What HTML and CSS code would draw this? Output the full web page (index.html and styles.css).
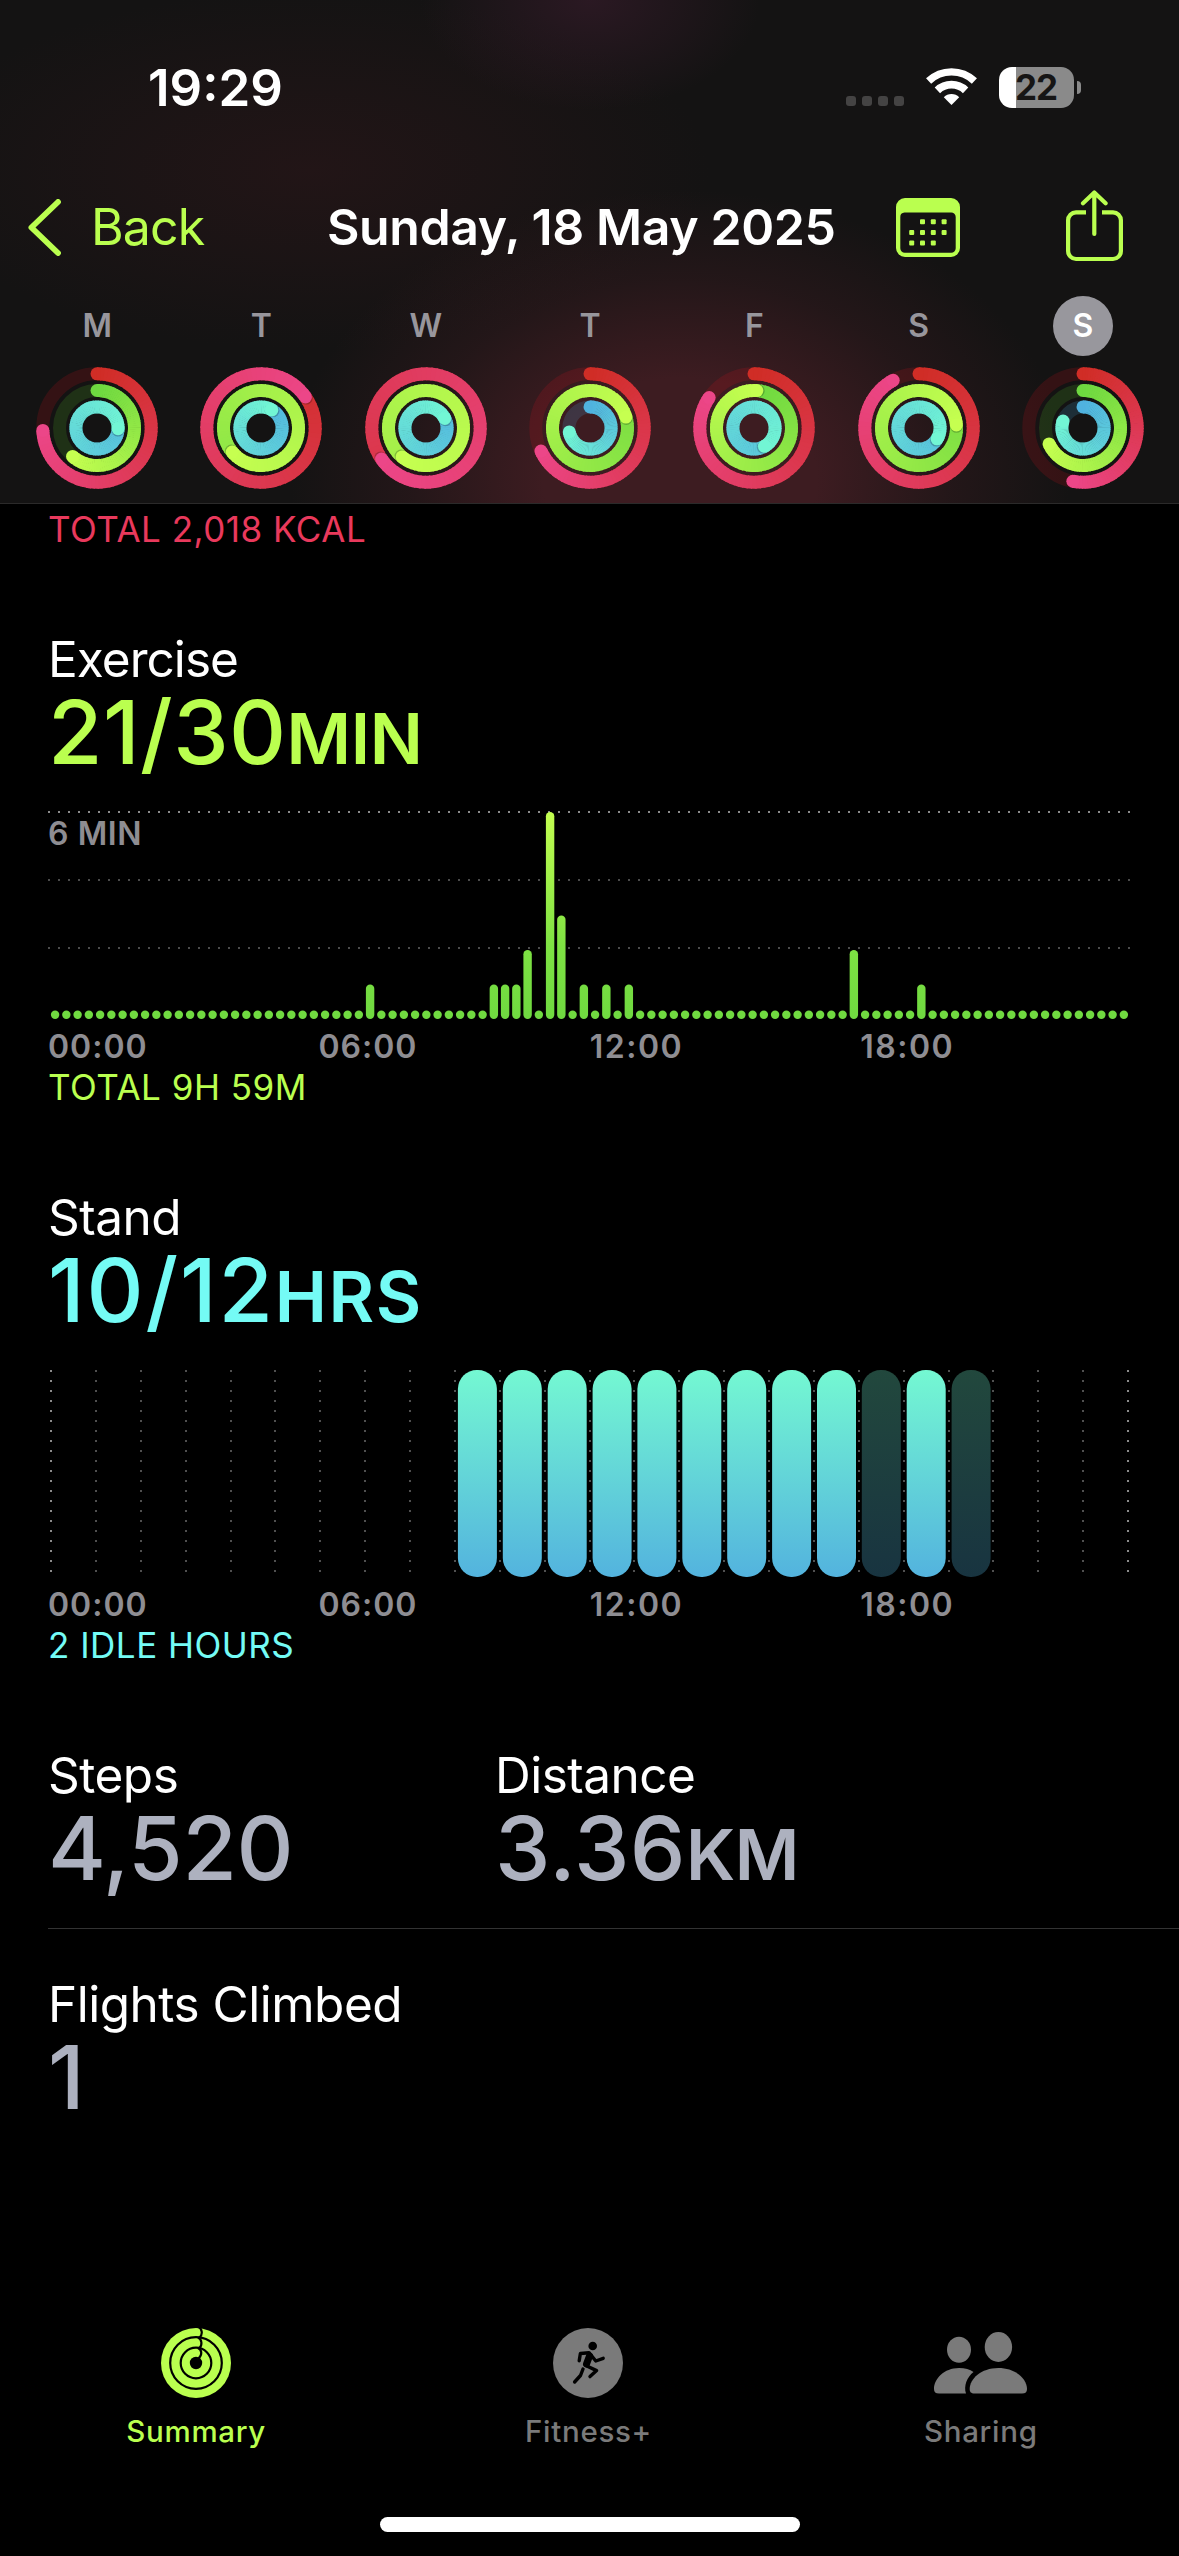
FILE: index.html
```html
<!DOCTYPE html>
<html lang="en">
<head>
    <meta charset="UTF-8">
    <meta name="viewport" content="width=device-width, initial-scale=1.0">
    <title>Activity Summary</title>
    <link rel="stylesheet" href="styles.css">
</head>
<body>
    <div class="screen">
        <header class="header">
            <div class="status-bar">
                <span class="time">19:29</span>
                <div class="status-icons">
                    <svg class="signal" width="58" height="38" viewBox="0 0 58 38" fill="#444343">
                        <rect x="0" y="28" width="10" height="10" rx="3"/>
                        <rect x="16" y="28" width="10" height="10" rx="3"/>
                        <rect x="32" y="28" width="10" height="10" rx="3"/>
                        <rect x="48" y="28" width="10" height="10" rx="3"/>
                    </svg>
                    <svg class="wifi" width="51" height="38" viewBox="0 0 51 38" fill="none" stroke="#fff">
                        <path d="M2.6 13A33.2 33.2 0 0 1 48.4 13" stroke-width="7.4"/>
                        <path d="M11.4 22.3A20.5 20.5 0 0 1 39.6 22.3" stroke-width="7.8"/>
                        <path d="M25.5 37L17.8 29.2A11 11 0 0 1 33.2 29.2Z" fill="#fff" stroke="none"/>
                    </svg>
                    <div class="battery">22</div>
                    <div class="battery-tip"></div>
                </div>
            </div>

            <nav class="nav">
                <div class="back">
                    <svg width="33" height="57" viewBox="0 0 33 57" fill="none" stroke="#baff4f" stroke-width="5.8" stroke-linecap="round" stroke-linejoin="round">
                        <path d="M30 3L3.4 28.5L30 54"/>
                    </svg>
                    <span class="back-label">Back</span>
                </div>
                <h1 class="title">Sunday, 18 May 2025</h1>
                <svg width="64" height="59" viewBox="0 0 64 59" fill="#baff4f">
                    <path fill-rule="evenodd" d="M9 0H55A9 9 0 0 1 64 9V50A9 9 0 0 1 55 59H9A9 9 0 0 1 0 50V9A9 9 0 0 1 9 0ZM8.5 14.5A4.5 4.5 0 0 0 4.3 19V50.2A4.5 4.5 0 0 0 8.8 54.7H55.2A4.5 4.5 0 0 0 59.7 50.2V19A4.5 4.5 0 0 0 55.2 14.5Z"/>
                    <g>
                        <rect x="24" y="21.2" width="5" height="5" rx="1"/>
                        <rect x="34.8" y="21.2" width="5" height="5" rx="1"/>
                        <rect x="45.6" y="21.2" width="5" height="5" rx="1"/>
                        <rect x="13.2" y="31.9" width="5" height="5" rx="1"/>
                        <rect x="24" y="31.9" width="5" height="5" rx="1"/>
                        <rect x="34.8" y="31.9" width="5" height="5" rx="1"/>
                        <rect x="45.6" y="31.9" width="5" height="5" rx="1"/>
                        <rect x="13.2" y="42.6" width="5" height="5" rx="1"/>
                        <rect x="24" y="42.6" width="5" height="5" rx="1"/>
                        <rect x="34.8" y="42.6" width="5" height="5" rx="1"/>
                    </g>
                </svg>
                <svg class="share" width="57" height="74" viewBox="0 0 57 74" fill="none" stroke="#baff4f" stroke-width="4.2" stroke-linejoin="round">
                    <path d="M20 22.3H10A8 8 0 0 0 2.1 30.3V61A8 8 0 0 0 10 69H47A8 8 0 0 0 54.9 61V30.3A8 8 0 0 0 47 22.3H36"/>
                    <path stroke-linecap="round" d="M28.3 44V2.5M17 13.2L28.3 2.5L39.6 13.2"/>
                </svg>
            </nav>

            <div class="week" id="week"></div>
        </header>

        <main class="content">
            <div class="total move">TOTAL 2,018 KCAL</div>

            <section class="section">
                <div class="label tight">Exercise</div>
                <div class="value exercise">21/30<span class="unit">MIN</span></div>
                <div class="chart">
                    <svg id="exercise-chart" width="1131" height="208" viewBox="0 0 1131 208">
                        <defs>
                            <linearGradient id="green" gradientUnits="userSpaceOnUse" x1="0" y1="208" x2="0" y2="0">
                                <stop offset="0" stop-color="#6fd940"/>
                                <stop offset="0.35" stop-color="#7ee243"/>
                                <stop offset="1" stop-color="#c4fe50"/>
                            </linearGradient>
                        </defs>
                    </svg>
                    <span class="chart-max">6 MIN</span>
                </div>
                <div class="axis"><span>00:00</span><span>06:00</span><span class="late">12:00</span><span class="late">18:00</span></div>
                <div class="total exercise">TOTAL 9H 59M</div>
            </section>

            <section class="section">
                <div class="label">Stand</div>
                <div class="value stand wide">10/12<span class="unit">HRS</span></div>
                <div class="chart">
                    <svg id="stand-chart" width="1131" height="208" viewBox="0 0 1131 208">
                        <defs>
                            <linearGradient id="blue" x1="0" y1="1" x2="0" y2="0">
                                <stop offset="0" stop-color="#53b3de"/>
                                <stop offset="1" stop-color="#74f8d2"/>
                            </linearGradient>
                        </defs>
                    </svg>
                </div>
                <div class="axis"><span>00:00</span><span>06:00</span><span class="late">12:00</span><span class="late">18:00</span></div>
                <div class="total stand">2 IDLE HOURS</div>
            </section>

            <section class="section stats">
                <div class="stat">
                    <div class="label">Steps</div>
                    <div class="value steps">4,520</div>
                </div>
                <div class="stat">
                    <div class="label">Distance</div>
                    <div class="value">3.36<span class="unit">KM</span></div>
                </div>
            </section>
            <section class="flights">
                <div class="label">Flights Climbed</div>
                <div class="value">1</div>
            </section>
        </main>

        <footer class="tab-bar">
            <div class="tabs">
                <div class="tab active">
                    <svg width="70" height="70" viewBox="0 0 70 70">
                        <circle cx="35" cy="35" r="35" fill="#baff4f"/>
                        <g fill="none" stroke="#000" stroke-width="2.2">
                            <circle cx="35" cy="35" r="25.8"/>
                            <circle cx="35" cy="35" r="15.3"/>
                            <path d="M36.5 -1.5C41.5 0.5 42 6.5 38.5 9.5"/>
                            <path d="M37 9.500C41 11.5 41.5 17 38.5 20"/>
                            <path d="M37 20C41 22 41.5 27 37.5 30.5"/>
                        </g>
                        <circle cx="35" cy="35" r="6.2"/>
                    </svg>
                    <span>Summary</span>
                </div>
                <div class="tab">
                    <svg width="70" height="70" viewBox="0 0 70 70">
                        <circle cx="35" cy="35" r="35" fill="#7a7a7a"/>
                        <circle cx="39.7" cy="18" r="4.3"/>
                        <g fill="none" stroke="#000" stroke-width="3.4" stroke-linecap="round" stroke-linejoin="round">
                            <path d="M26.2 32.8L27.4 25.5L36 24.7L42.8 33L50.2 30.3"/>
                            <path d="M32.8 37.5L43.6 42.6L37 48.6"/>
                            <path d="M30 41L27.5 47.5L21.6 54"/>
                            <path d="M36.5 28L33.5 36" stroke-width="7"/>
                        </g>
                    </svg>
                    <span>Fitness+</span>
                </div>
                <div class="tab">
                    <svg width="93" height="70" viewBox="0 0 93 70" fill="#7a7a7a">
                        <ellipse cx="64.4" cy="19" rx="13.7" ry="15"/>
                        <ellipse cx="25" cy="21.8" rx="12" ry="13"/>
                        <path d="M40.5 65.5C37 65.5 35.7 64 35.7 61C35.7 51 47 40 64.3 40C81.6 40 93 51 93 61C93 64 91.5 65.5 88 65.5Z"/>
                        <path d="M5 65.5C1.5 65.5 0 64 0 61C0 51 10 40 25 40C31 40 36 41.5 39.5 44C33 49 29.5 58 32 65.5Z"/>
                    </svg>
                    <span>Sharing</span>
                </div>
            </div>
            <div class="home-indicator"></div>
        </footer>
    </div>

    <script>
        // ring progress per day: [move, exercise, stand], 1 = goal reached
        const days = [
            { name: 'M', rings: [0.743, 0.613, 1.255] },
            { name: 'T', rings: [1.153, 1.639, 1.086] },
            { name: 'W', rings: [1.653, 2.61, 1.175] },
            { name: 'T', rings: [0.68, 1.203, 0.72] },
            { name: 'F', rings: [0.845, 1.012, 1.418] },
            { name: 'S', rings: [0.921, 1.237, 1.336] },
            { name: 'S', rings: [0.53, 0.68, 0.803], selected: true }
        ];

        const ringStyles = [
            { r: 54.2, from: [208, 45, 38], to: [236, 70, 136], track: 'rgba(225, 20, 30, 0.16)' },
            { r: 37.5, from: [110, 216, 64], to: [198, 255, 80], track: 'rgba(95, 220, 40, 0.15)' },
            { r: 21.1, from: [80, 178, 223], to: [114, 246, 212], track: 'rgba(70, 170, 220, 0.18)' }
        ];

        function point(r, turn) {
            const a = turn * 2 * Math.PI;
            return [(61 + r * Math.sin(a)).toFixed(2), (61 - r * Math.cos(a)).toFixed(2)];
        }

        function mix(from, to, t) {
            return 'rgb(' + from.map((c, i) => Math.round(c + (to[i] - c) * t)).join(',') + ')';
        }

        function ring(style, progress) {
            const r = style.r;
            const start = Math.max(0, progress - 1);
            const steps = 72;
            let out = `<circle cx="61" cy="61" r="${r}" fill="none" stroke="${style.track}" stroke-width="13"/>`;

            if (progress < 1) {
                const [x, y] = point(r, 0);
                out += `<circle cx="${x}" cy="${y}" r="6.5" fill="${mix(style.from, style.to, 0)}"/>`;
            }

            const size = (progress - start) / steps;
            for (let i = 0; i < steps; i++) {
                const a = start + i * size;
                const b = Math.min(a + size * 1.3, progress);
                const [x1, y1] = point(r, a);
                const [x2, y2] = point(r, b);
                out += `<path d="M${x1} ${y1}A${r} ${r} 0 0 1 ${x2} ${y2}" fill="none" stroke-width="13" stroke="${mix(style.from, style.to, a / progress)}"/>`;
            }

            if (progress >= 1) {
                const [sx, sy] = point(r, progress + 1.6 / (2 * Math.PI * r));
                out += `<circle cx="${sx}" cy="${sy}" r="6.3" fill="rgba(0, 0, 0, 0.22)"/>`;
            }
            const [ex, ey] = point(r, progress);
            out += `<circle cx="${ex}" cy="${ey}" r="6.5" fill="${mix(style.from, style.to, 1)}"/>`;
            return out;
        }

        document.getElementById('week').innerHTML = days.map(day => `
            <div class="day">
                <span class="day-name${day.selected ? ' selected' : ''}">${day.name}</span>
                <svg width="122" height="122" viewBox="0 0 122 122">${day.rings.map((p, i) => ring(ringStyles[i], p)).join('')}</svg>
            </div>`).join('');

        // exercise minutes per quarter of an hour
        const minutes = { 28: 1, 39: 1, 40: 1, 41: 1, 42: 2, 44: 6, 45: 3, 47: 1, 49: 1, 51: 1, 71: 2, 77: 1 };
        let bars = '';
        [0, 68, 136].forEach((y, i) => {
            bars += `<line x1="0" x2="1083" y1="${y + 1}" y2="${y + 1}" stroke="${i ? '#4c4c4c' : '#8c8c8c'}" stroke-width="2" stroke-dasharray="2 8"/>`;
        });
        for (let i = 0; i < 96; i++) {
            const h = minutes[i] ? minutes[i] * 34.5 : 8.4;
            bars += `<rect x="${(2.9 + i * 11.25).toFixed(2)}" y="${208 - h}" width="8.4" height="${h}" rx="4.2" fill="url(#green)"/>`;
        }
        document.getElementById('exercise-chart').innerHTML += bars;

        // stand hours: 1 = stood, 0 = idle
        const hours = { 9: 1, 10: 1, 11: 1, 12: 1, 13: 1, 14: 1, 15: 1, 16: 1, 17: 1, 18: 0, 19: 1, 20: 0 };
        let stand = '';
        for (let i = 0; i <= 24; i++) {
            const x = Math.round(3 + i * 44.88);
            stand += `<line x1="${x}" x2="${x}" y1="1" y2="204" stroke="${i % 24 ? '#505050' : '#8c8c8c'}" stroke-width="2" stroke-dasharray="2 8"/>`;
            if (hours[i] !== undefined) {
                stand += `<rect x="${(6 + i * 44.88).toFixed(1)}" y="1" width="39" height="207" rx="19" fill="url(#blue)" opacity="${hours[i] ? 1 : 0.29}"/>`;
            }
        }
        document.getElementById('stand-chart').innerHTML += stand;
    </script>
</body>
</html>
```
FILE: styles.css
```css
* {
    box-sizing: border-box;
}

body {
    margin: 0;
    background-color: #000;
    color: #fff;
    font-family: Inter, "Liberation Sans", sans-serif;
}

svg {
    display: block;
    flex-shrink: 0;
}

.screen {
    display: flex;
    flex-direction: column;
    width: 1179px;
    height: 2556px;
    overflow: hidden;
}

/* header */
.header {
    height: 504px;
    padding-top: 57px;
    border-bottom: 1px solid #2b2a2a;
    background:
        radial-gradient(ellipse 170px 110px at 590px 0, rgba(65, 30, 50, 0.5), transparent),
        radial-gradient(ellipse 400px 180px at 310px 170px, rgba(55, 24, 28, 0.4), transparent),
        radial-gradient(ellipse 390px 290px at 680px 480px, #3d1c21 35%, rgba(50, 26, 30, 0.5) 70%, transparent),
        #141313;
}

.status-bar {
    display: flex;
    justify-content: space-between;
    align-items: center;
    height: 60px;
    padding: 0 98px 0 148px;
}

.time {
    padding-top: 2px;
    font-size: 51px;
    line-height: 60px;
    font-weight: 600;
}

.status-icons {
    display: flex;
    align-items: center;
}

.wifi {
    margin: 0 22px;
}

.battery {
    width: 75px;
    height: 41px;
    padding-right: 1px;
    border-radius: 13px;
    background: linear-gradient(to right, #fff 17px, #8a8a8a 17px);
    color: #161515;
    font-size: 35px;
    font-weight: 700;
    line-height: 41px;
    letter-spacing: -1px;
    text-align: center;
}

.battery-tip {
    width: 4px;
    height: 13px;
    margin-left: 3px;
    border-radius: 0 5px 5px 0;
    background-color: #8a8a8a;
}

.nav {
    display: flex;
    align-items: center;
    height: 60px;
    margin-top: 80px;
    padding-left: 28px;
}

.back {
    display: flex;
    align-items: center;
    gap: 30px;
    width: 299px;
}

.back-label {
    color: #baff4f;
    font-size: 50px;
    line-height: 60px;
    letter-spacing: -0.9px;
}

.title {
    width: 569px;
    margin: 0;
    font-size: 50px;
    font-weight: 600;
    line-height: 60px;
    letter-spacing: -0.4px;
    white-space: nowrap;
}

.share {
    margin-left: 106px;
}

.week {
    display: grid;
    grid-template-columns: repeat(7, 1fr);
    padding: 39px 14px 0 15px;
}

.day {
    display: flex;
    flex-direction: column;
    align-items: center;
    gap: 11px;
}

.day-name {
    width: 60px;
    height: 60px;
    border-radius: 50%;
    color: #98969c;
    font-size: 32px;
    font-weight: 600;
    line-height: 60px;
    text-align: center;
}

.day-name.selected {
    background-color: #98979d;
    color: #fff;
}

/* summary */
.content {
    flex: 1;
    padding: 4px 0 0 48px;
}

.section {
    margin-top: 79px;
}

.label {
    font-size: 49.5px;
    line-height: 60px;
    letter-spacing: -0.5px;
}

.label.tight {
    letter-spacing: -0.95px;
}

.value {
    height: 86px;
    color: #adb1bf;
    font-size: 88.5px;
    font-weight: 500;
    line-height: 86px;
    letter-spacing: 0.4px;
}

.value.wide {
    letter-spacing: 1.8px;
}

.value.steps {
    letter-spacing: -0.4px;
}

.unit {
    font-size: 70px;
    font-weight: 600;
    line-height: 0;
    letter-spacing: -0.4px;
}

.wide .unit {
    letter-spacing: 1.5px;
}

.total {
    font-size: 35px;
    line-height: 42px;
    letter-spacing: 0.5px;
}

.move {
    color: #e9395c;
}

.exercise {
    color: #baff4f;
}

.stand {
    color: #74fbf5;
}

.chart {
    position: relative;
    height: 208px;
    margin: 36px 0 8px;
}

.chart-max {
    position: absolute;
    left: 0;
    top: 3px;
    color: #8e8d92;
    font-size: 32px;
    font-weight: 600;
    line-height: 40px;
    letter-spacing: 0.6px;
}

.axis {
    display: grid;
    grid-template-columns: repeat(4, 270.4px);
    height: 39px;
    color: #8e8d92;
    font-size: 32px;
    font-weight: 600;
    line-height: 40px;
    letter-spacing: 1px;
}

.axis .late {
    padding-left: 1px;
    letter-spacing: 1.5px;
}

.stats {
    display: grid;
    grid-template-columns: 447px 1fr;
    padding-bottom: 37px;
    border-bottom: 1px solid #333;
}

.flights {
    margin-top: 45px;
}

/* tab bar */
.tab-bar {
    height: 246px;
    padding-top: 18px;
}

.tabs {
    display: grid;
    grid-template-columns: repeat(3, 1fr);
    padding-right: 2px;
}

.tab {
    display: flex;
    flex-direction: column;
    align-items: center;
    gap: 15px;
    color: #7a7a7a;
    font-size: 29.5px;
    font-weight: 500;
    line-height: 36px;
    letter-spacing: 0.7px;
}

.tab.active {
    color: #baff4f;
}

.home-indicator {
    width: 420px;
    height: 15px;
    margin: 68px auto 0;
    border-radius: 8px;
    background-color: #fff;
}
```
